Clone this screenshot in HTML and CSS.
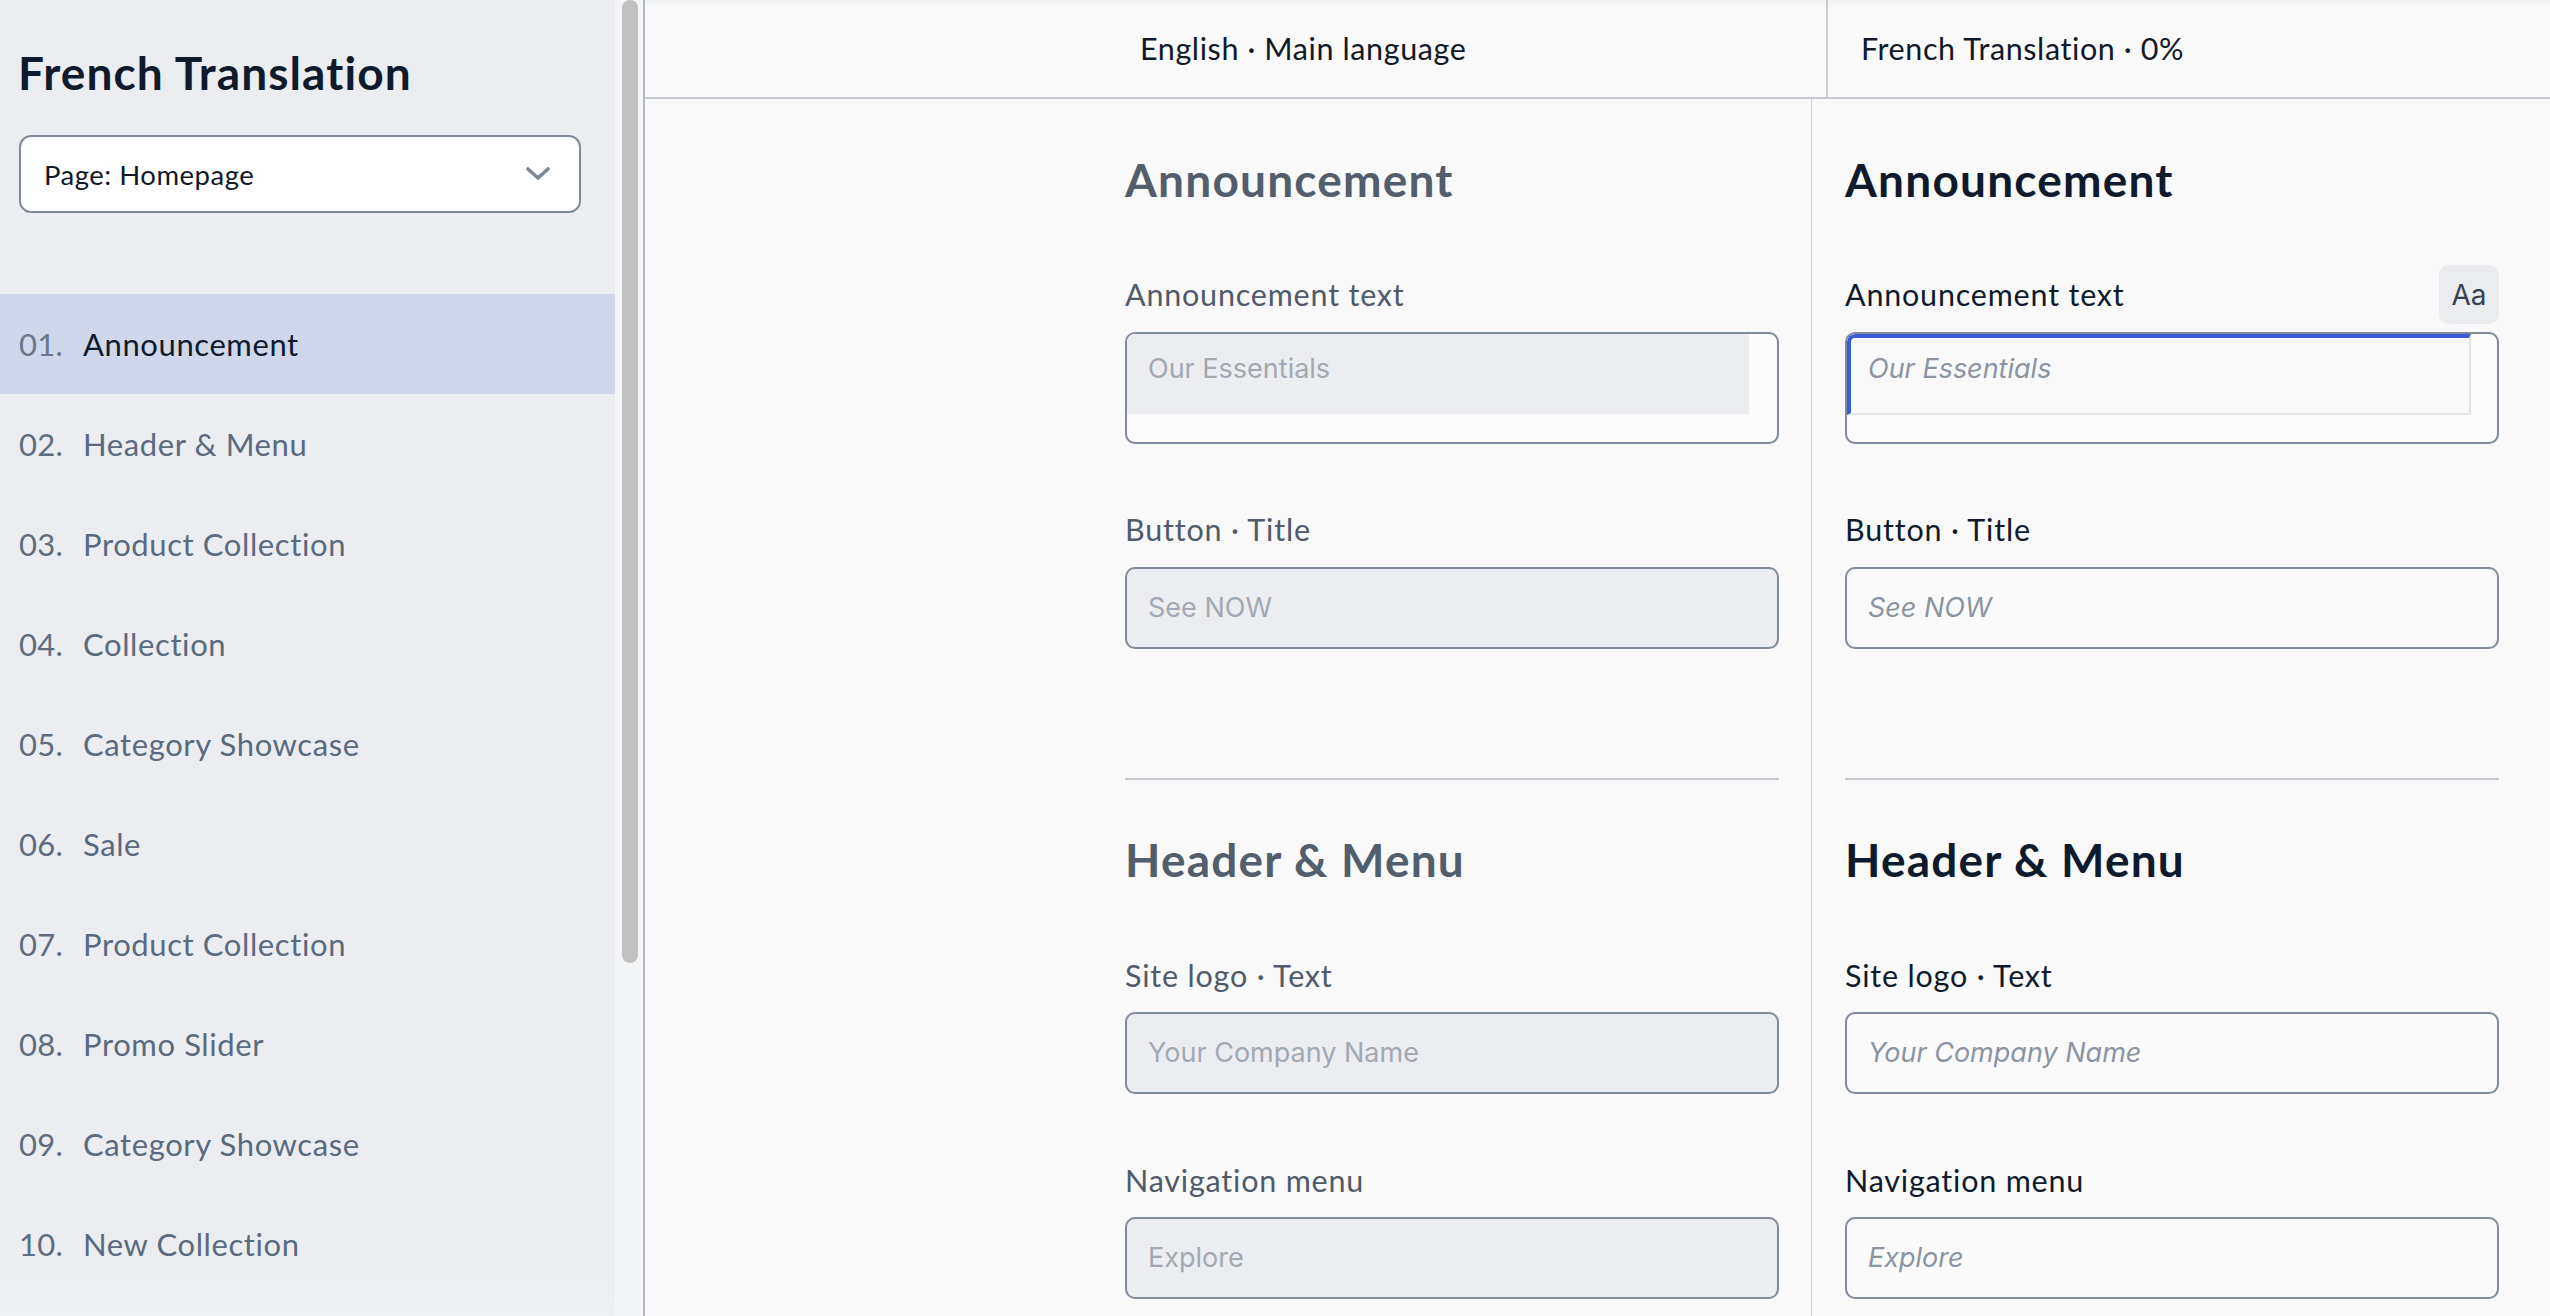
FILE: index.html
```html
<!DOCTYPE html>
<html lang="en">
<head>
<meta charset="utf-8">
<title>French Translation</title>
<link rel="stylesheet" href="styles.css">
</head>
<body>
<div class="app">
  <aside class="sidebar">
    <div class="side-inner">
      <h1 class="side-title">French Translation</h1>
      <div class="select">
        <span class="select-text">Page: Homepage</span>
        <svg class="chevron" width="24" height="14" viewBox="0 0 24 14"><path d="M2 2 L12 11 L22 2" fill="none" stroke="#7c8797" stroke-width="3.6" stroke-linecap="round" stroke-linejoin="round"/></svg>
      </div>
      <ul class="nav">
        <li class="nav-item active"><span class="num">01.</span><span class="name">Announcement</span></li>
        <li class="nav-item"><span class="num">02.</span><span class="name">Header &amp; Menu</span></li>
        <li class="nav-item"><span class="num">03.</span><span class="name">Product Collection</span></li>
        <li class="nav-item"><span class="num">04.</span><span class="name">Collection</span></li>
        <li class="nav-item"><span class="num">05.</span><span class="name">Category Showcase</span></li>
        <li class="nav-item"><span class="num">06.</span><span class="name">Sale</span></li>
        <li class="nav-item"><span class="num">07.</span><span class="name">Product Collection</span></li>
        <li class="nav-item"><span class="num">08.</span><span class="name">Promo Slider</span></li>
        <li class="nav-item"><span class="num">09.</span><span class="name">Category Showcase</span></li>
        <li class="nav-item"><span class="num">10.</span><span class="name">New Collection</span></li>
      </ul>
    </div>
    <div class="scrolltrack"><div class="thumb"></div></div>
  </aside>
  <main class="main">
    <div class="cols-head">
      <div class="head-cell head-src">English · Main language</div>
      <div class="head-cell head-tgt">French Translation · 0%</div>
    </div>
    <div class="cols">
      <div class="col col-src">
        <div class="col-inner">
          <section class="section">
            <h2 class="sec-title">Announcement</h2>
            <div class="field">
              <div class="field-row"><span class="field-label">Announcement text</span></div>
              <div class="textarea"><div class="ta-inner">Our Essentials</div></div>
            </div>
            <div class="field">
              <div class="field-row"><span class="field-label">Button · Title</span></div>
              <div class="input">See NOW</div>
            </div>
          </section>
          <section class="section">
            <h2 class="sec-title">Header &amp; Menu</h2>
            <div class="field">
              <div class="field-row"><span class="field-label">Site logo · Text</span></div>
              <div class="input">Your Company Name</div>
            </div>
            <div class="field">
              <div class="field-row"><span class="field-label">Navigation menu</span></div>
              <div class="input">Explore</div>
            </div>
          </section>
        </div>
      </div>
      <div class="col col-tgt">
        <div class="col-inner">
          <section class="section">
            <h2 class="sec-title">Announcement</h2>
            <div class="field">
              <div class="field-row"><span class="field-label">Announcement text</span><span class="aa-btn">Aa</span></div>
              <div class="textarea"><div class="ta-inner">Our Essentials</div></div>
            </div>
            <div class="field">
              <div class="field-row"><span class="field-label">Button · Title</span></div>
              <div class="input">See NOW</div>
            </div>
          </section>
          <section class="section">
            <h2 class="sec-title">Header &amp; Menu</h2>
            <div class="field">
              <div class="field-row"><span class="field-label">Site logo · Text</span></div>
              <div class="input">Your Company Name</div>
            </div>
            <div class="field">
              <div class="field-row"><span class="field-label">Navigation menu</span></div>
              <div class="input">Explore</div>
            </div>
          </section>
        </div>
      </div>
    </div>
  </main>
</div>
</body>
</html>
```

FILE: styles.css
```css
* { box-sizing: border-box; }
html, body { margin: 0; padding: 0; }
body {
  font-family: Lato, "Open Sans", "Liberation Sans", sans-serif;
  background: #f9f9f9;
  color: #0f1b2d;
  width: 2550px;
  height: 1316px;
  overflow: hidden;
}
.app {
  display: flex;
  height: 1316px;
  overflow: hidden;
}

/* Sidebar */
.sidebar {
  display: flex;
  flex: 0 0 643px;
  height: 100%;
}
.side-inner {
  width: 615px;
  background: #ebedf0;
  background-image: linear-gradient(to bottom, #ebedf0 0, #ebedf0 1270px, #eef0f2 1316px);
  overflow: hidden;
}
.side-title {
  margin: 0;
  padding: 45px 0 0 18px;
  font-size: 46px;
  line-height: 1.2;
  font-weight: 700;
  color: #0f1b2d;
  letter-spacing: 1.1px;
}
.select {
  margin: 35px 0 0 19px;
  width: 562px;
  height: 78px;
  background: #ffffff;
  border: 2px solid #7f8a9a;
  border-radius: 12px;
  display: flex;
  align-items: center;
  justify-content: space-between;
  padding: 0 29px 0 23px;
}
.select-text {
  font-size: 27.5px;
  line-height: 1.2;
  color: #111827;
  letter-spacing: 0.5px;
}
.chevron { display: block; }
.nav {
  list-style: none;
  margin: 81px 0 0 0;
  padding: 0;
}
.nav-item {
  height: 100px;
  display: flex;
  align-items: center;
  padding-left: 19px;
  font-size: 31px;
  line-height: 1.2;
  letter-spacing: 0.6px;
  color: #5a6a7f;
}
.nav-item .num {
  width: 64px;
  flex: 0 0 64px;
  color: #5f6c7e;
  letter-spacing: 0.3px;
}
.nav-item.active {
  background: #d0d7ea;
}
.nav-item.active .num { color: #68778a; }
.nav-item.active .name { color: #0f1b2d; }

.scrolltrack {
  width: 28px;
  background: #f4f5f6;
  padding-left: 7px;
}
.thumb {
  width: 16px;
  height: 963px;
  background: #c1c1c1;
  border-radius: 8px;
}

/* Main */
.main {
  flex: 1;
  border-left: 2px solid #b0b8c4;
  background: #f9f9f9;
  display: flex;
  flex-direction: column;
  min-width: 0;
}
.cols-head {
  flex: 0 0 99px;
  display: grid;
  grid-template-columns: 1183px 1fr;
  height: 99px;
  border-bottom: 2px solid #c6cad2;
  background: linear-gradient(to bottom, #f1f2f3 0, #f9f9f9 6px);
}
.head-cell {
  display: flex;
  align-items: center;
  font-size: 30.5px;
  line-height: 1.2;
  letter-spacing: 0.6px;
  color: #111827;
}
.head-src {
  padding-left: 495px;
  border-right: 2px solid #c8ccd4;
}
.head-tgt {
  padding-left: 33px;
}
.cols {
  display: grid;
  grid-template-columns: 1167px 1fr;
  flex: 1 1 auto;
  min-height: 0;
}
.col-src {
  border-right: 1px solid #cdd1d8;
  padding-left: 480px;
}
.col-tgt {
  padding-left: 33px;
}
.col-inner {
  width: 654px;
}
.section {
  padding: 53px 0 129px 0;
}
.section + .section {
  border-top: 2px solid #c6cad2;
  padding-top: 52px;
}
.sec-title {
  margin: 0 0 58px 0;
  font-size: 46px;
  line-height: 1.2;
  font-weight: 700;
  letter-spacing: 1.2px;
}
.col-src .sec-title { color: #535e6d; }
.col-tgt .sec-title { color: #0f1b2d; }

.field + .field { margin-top: 56px; }
.field-row {
  height: 59px;
  display: flex;
  align-items: center;
  justify-content: space-between;
  margin-bottom: 8px;
}
.field-label {
  font-size: 30.5px;
  line-height: 1.2;
  letter-spacing: 0.8px;
}
.col-src .field-label { color: #4f5a6a; }
.col-tgt .field-label { color: #0f1b2d; }

.aa-btn {
  width: 60px;
  height: 59px;
  border-radius: 10px;
  background: #ebecef;
  display: flex;
  align-items: center;
  justify-content: center;
  font-family: Inter, "Noto Sans", sans-serif;
  font-size: 28px;
  letter-spacing: 0;
  color: #374151;
}

.input {
  height: 82px;
  border: 2px solid #7f8a9a;
  border-radius: 10px;
  display: flex;
  align-items: center;
  padding: 0 21px;
  font-family: Inter, "Noto Sans", sans-serif;
  font-size: 27px;
  line-height: 1.2;
}
.col-src .input {
  background: #ecedf0;
  color: #a2a9b4;
}
.col-tgt .input {
  background: #fafafa;
  color: #8a94a2;
  font-style: italic;
}

.textarea {
  height: 112px;
  border: 2px solid #7f8a9a;
  border-radius: 10px;
  background: #fbfbfb;
  overflow: hidden;
}
.ta-inner {
  width: 622px;
  height: 80px;
  font-family: Inter, "Noto Sans", sans-serif;
  font-size: 27px;
  line-height: 1.2;
  padding: 19px 21px 0 21px;
}
.col-src .ta-inner {
  background: #ecedf0;
  color: #a2a9b4;
}
.col-tgt .ta-inner {
  height: 81px;
  width: 624px;
  background: #f9f9fa;
  color: #8a94a2;
  font-style: italic;
  border-top: 4px solid #3b5bdb;
  border-left: 4px solid #3b5bdb;
  border-right: 2px solid #e4e5e8;
  border-bottom: 2px solid #e4e5e8;
  border-top-left-radius: 8px;
  padding: 15px 17px 0 17px;
}
```
